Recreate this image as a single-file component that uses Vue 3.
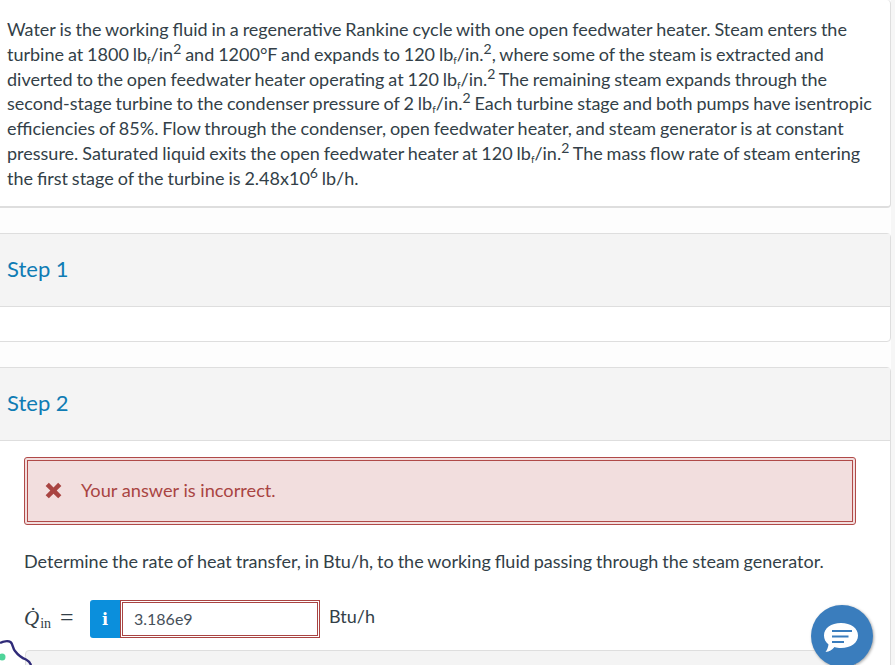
<template>
  <div class="page">
    <main class="content">
      <section class="card question">
        <p>
          Water is the working fluid in a regenerative Rankine cycle with one open feedwater heater. Steam enters the<br />
          turbine at 1800 lb<sub>f</sub>/in<sup>2</sup> and 1200°F and expands to 120 lb<sub>f</sub>/in.<sup>2</sup>, where some of the steam is extracted and<br />
          diverted to the open feedwater heater operating at 120 lb<sub>f</sub>/in.<sup>2</sup> The remaining steam expands through the<br />
          second-stage turbine to the condenser pressure of 2 lb<sub>f</sub>/in.<sup>2</sup> Each turbine stage and both pumps have isentropic<br />
          efficiencies of 85%. Flow through the condenser, open feedwater heater, and steam generator is at constant<br />
          pressure. Saturated liquid exits the open feedwater heater at 120 lb<sub>f</sub>/in.<sup>2</sup> The mass flow rate of steam entering<br />
          the first stage of the turbine is 2.48x10<sup>6</sup> lb/h.
        </p>
      </section>

      <section class="card step">
        <header class="step-header"><h2>Step 1</h2></header>
        <div class="step-body empty"></div>
      </section>

      <section class="card step last">
        <header class="step-header"><h2>Step 2</h2></header>
        <div class="step-body">
          <div class="alert">
            <svg class="alert-icon" viewBox="0 0 16 16" width="17" height="17">
              <path fill="currentColor" d="M3.6 .8 8 5.1 12.4 .8 15.4 3.8 11 8.1 15.4 12.4 12.4 15.4 8 11.1 3.6 15.4 .6 12.4 5 8.1 .6 3.8z" />
            </svg>
            <span>Your answer is incorrect.</span>
          </div>

          <p class="prompt">Determine the rate of heat transfer, in Btu/h, to the working fluid passing through the steam generator.</p>

          <div class="answer-row">
            <span class="math"><i class="q">Q̇</i><span class="sub">in</span><span class="eq">=</span></span>
            <div class="field">
              <span class="info">i</span>
              <div class="input-wrap"><input type="text" value="3.186e9" readonly /></div>
            </div>
            <span class="unit">Btu/h</span>
          </div>

          <div class="next-card"></div>
        </div>
      </section>
    </main>

    <svg class="squiggle" viewBox="0 0 32 27" width="32" height="27">
      <path d="M0 5C3 3.500 8 2.500 10.500 4 13 6 12.500 10 15 13 18 17 22 20 26 21.500 28 22.500 30 24 31 27" fill="none" stroke="#2f2a78" stroke-width="2.400" />
      <circle cx="2" cy="19" r="3.500" fill="#4fd49a" />
    </svg>

    <button class="chat" aria-label="Chat">
      <svg viewBox="0 0 36 34" width="36" height="34">
        <path fill="#fff" d="M17 4C27 4 34 9 34 16.500 34 24 27 29 17 29 14.500 29 12.500 28.700 10.500 28 8 31 5.500 32.500 1.500 33 3 31 4 28.500 4.500 25.500 1.500 23 0 20 0 16.500 0 9 7 4 17 4Z" />
        <path stroke="#3a7dbd" stroke-width="2" d="M8 12H28M8 17.500H24.500M8 23H20" />
      </svg>
    </button>
  </div>
</template>

<script setup>
</script>

<style>
html, body {
  margin: 0;
  background: #fff;
}
</style>

<style scoped>
.page {
  position: relative;
  width: 895px;
  height: 665px;
  overflow: hidden;
  background: #f6f6f6;
  font-family: Lato, "Noto Sans", sans-serif;
  color: #333f48;
}

.content {
  width: 891px;
  height: 665px;
  background: #fdfdfd;
  overflow: hidden;
}

.card {
  margin-left: -6px;
  background: #fff;
  border: 1px solid #dedede;
  border-top: 0;
  border-radius: 4px;
  box-sizing: border-box;
  width: 897px;
}

.question {
  height: 208px;
  padding: 17px 0 0 12px;
  border-bottom-width: 2px;
}

.question p {
  margin: 0;
  font-size: 18px;
  line-height: 24.8px;
  word-spacing: -.7px;
  white-space: nowrap;
}

sup, sub {
  line-height: 0;
}
sup {
  font-size: 14px;
  vertical-align: 7.500px;
}
sub {
  font-size: 10px;
  vertical-align: -3px;
}

.step {
  margin-top: 25px;
  border-top: 1px solid #dedede;
}

.step-header {
  height: 73px;
  box-sizing: border-box;
  display: flex;
  align-items: center;
  padding: 0 0 3px 12px;
  background: #f4f4f4;
  border-bottom: 1px solid #dedede;
}

.step-header h2 {
  margin: 0;
  font-size: 22px;
  font-weight: 400;
  color: #0f7cb4;
}

.step-body.empty {
  height: 34px;
}

.step.last {
  height: 400px;
}

.step.last .step-body {
  padding: 16px 34px 0 29px;
}

.alert {
  height: 68px;
  box-sizing: border-box;
  display: flex;
  align-items: center;
  gap: 19px;
  padding: 0 0 2px 17px;
  color: #a94442;
  font-size: 18.200px;
  background: #f2dede;
  border: 4px double #b04a48;
  border-radius: 3px;
}

.alert-icon {
  flex: none;
}

.prompt {
  margin: 24px 0 0;
  font-size: 18px;
  line-height: 24px;
  word-spacing: -.68px;
}

.answer-row {
  display: flex;
  align-items: center;
  margin-top: 27px;
  height: 38px;
}

.math {
  width: 66px;
  flex: none;
  margin-top: -2px;
  font-family: "Liberation Serif", serif;
  font-size: 21px;
}
.q {
  margin-right: 1px;
}
.sub {
  font-size: 14px;
  vertical-align: -3px;
}
.eq {
  margin-left: 9px;
  font-size: 24px;
}

.field {
  display: flex;
  height: 38px;
}

.info {
  width: 30px;
  display: flex;
  align-items: center;
  justify-content: center;
  background: #0b8fdc;
  border-radius: 3px 0 0 3px;
  color: #fff;
  font-family: "DejaVu Serif", serif;
  font-weight: 700;
  font-size: 16px;
}

.input-wrap {
  border: 3px double #a94442;
  width: 200px;
  box-sizing: border-box;
  background: #fff;
}

.input-wrap input {
  display: block;
  width: 100%;
  height: 100%;
  box-sizing: border-box;
  border: 0;
  outline: 0;
  padding: 0 11px 2px;
  font: 400 16px Lato, sans-serif;
  color: #46505a;
  background: transparent;
}

.unit {
  margin-left: 9px;
  font-size: 18px;
  word-spacing: 0;
  margin-top: -6px;
}

.next-card {
  margin-top: 12px;
  height: 60px;
  margin-left: 1px;
  background: #f4f4f4;
  border: 1px solid #dedede;
  border-radius: 4px;
}

.squiggle {
  position: absolute;
  left: 0;
  top: 638px;
}

.chat {
  position: absolute;
  left: 811px;
  top: 605px;
  width: 62px;
  height: 62px;
  padding: 0;
  border: 0;
  border-radius: 50%;
  background: #3a7dbd;
  box-shadow: 1px 1px 3px rgba(0, 0, 0, .35);
  display: flex;
  align-items: center;
  justify-content: center;
}
</style>
